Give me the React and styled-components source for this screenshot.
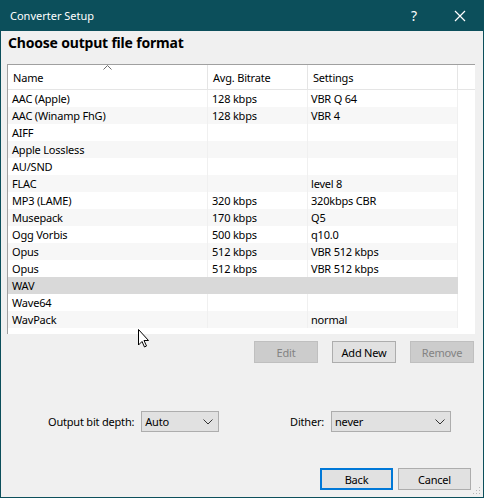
import React from "react";
import styled, { createGlobalStyle } from "styled-components";

const GlobalStyle = createGlobalStyle`
  html, body {
    margin: 0;
    padding: 0;
    background: #f0f0f0;
  }
  body {
    font-family: "Noto Sans", "Liberation Sans", sans-serif;
    font-size: 11px;
    letter-spacing: -0.2px;
    color: #000000;
  }
`;

const Window = styled.div`
  position: relative;
  width: 484px;
  height: 498px;
  box-sizing: border-box;
  border: 1px solid #0c4f5b;
  border-top: 0;
  background: #f0f0f0;
  display: flex;
  flex-direction: column;
  overflow: hidden;
`;

const TitleBar = styled.div`
  height: 31px;
  flex: none;
  background: #0c4f5b;
  color: #ffffff;
  display: flex;
  align-items: center;
  padding-left: 9px;
`;

const TitleText = styled.div`
  flex: 1;
  font-size: 11px;
  letter-spacing: 0;
`;

const TitleButton = styled.div`
  width: 46px;
  height: 31px;
  display: flex;
  align-items: center;
  justify-content: center;
  font-size: 14px;
`;

const Body = styled.div`
  flex: 1;
  display: flex;
  flex-direction: column;
  padding: 2px 8px 0 6px;
`;

const Heading = styled.h1`
  margin: 0 0 11px 1px;
  font-size: 14px;
  font-weight: 700;
  line-height: 20px;
`;

const List = styled.div`
  height: 269px;
  background: #ffffff;
  border-top: 1px solid #a0a0a0;
  border-left: 1px solid #a0a0a0;
  display: flex;
  flex-direction: column;
`;

const HeaderRow = styled.div`
  position: relative;
  display: flex;
  height: 24px;
  border-bottom: 1px solid #e5e5e5;
`;

const HeaderCell = styled.div`
  width: ${(p) => p.w}px;
  flex: ${(p) => (p.w ? "none" : "1")};
  box-sizing: border-box;
  border-right: ${(p) => (p.w ? "1px solid #e5e5e5" : "0")};
  padding-left: 5px;
  display: flex;
  align-items: center;
  position: relative;
`;

const SortArrow = styled.svg`
  position: absolute;
  top: 0;
  left: 95px;
`;

const Row = styled.div`
  display: flex;
  width: 450px;
  height: 17px;
  background: ${(p) => (p.selected ? "#d9d9d9" : p.odd ? "#f7f7f7" : "#ffffff")};
`;

const Cell = styled.div`
  width: ${(p) => p.w}px;
  flex: none;
  box-sizing: border-box;
  border-right: 1px solid ${(p) => (p.selected ? "#d9d9d9" : "#f0f0f0")};
  padding-left: ${(p) => p.pad}px;
  line-height: 17px;
  white-space: nowrap;
  overflow: hidden;
`;

const ButtonRow = styled.div`
  display: flex;
  justify-content: flex-end;
  gap: 14px;
  margin-top: 7px;
  padding-right: 1px;
`;

const Button = styled.div`
  width: ${(p) => p.w || 64}px;
  height: 22px;
  box-sizing: border-box;
  display: flex;
  align-items: center;
  justify-content: center;
  background: ${(p) => (p.disabled ? "#cccccc" : "#e1e1e1")};
  border: ${(p) =>
    p.primary ? "2px solid #0078d7" : p.disabled ? "1px solid #bfbfbf" : "1px solid #adadad"};
  color: ${(p) => (p.disabled ? "#838383" : "#000000")};
`;

const OptionsRow = styled.div`
  display: flex;
  justify-content: space-between;
  align-items: center;
  margin-top: 48px;
  padding: 0 24px 0 41px;
`;

const Field = styled.div`
  display: flex;
  align-items: center;
  gap: 7px;
`;

const Select = styled.div`
  width: ${(p) => p.w}px;
  height: 21px;
  box-sizing: border-box;
  background: #e1e1e1;
  border: 1px solid #adadad;
  display: flex;
  align-items: center;
  justify-content: space-between;
  padding: 0 5px 0 3px;
`;

const Footer = styled.div`
  display: flex;
  justify-content: flex-end;
  gap: 5px;
  margin-top: 36px;
  padding-right: 4px;
`;

const Grip = styled.svg`
  position: absolute;
  right: 2px;
  bottom: 2px;
`;

const Cursor = styled.svg`
  position: absolute;
  left: 137px;
  top: 329px;
`;

const formats = [
  ["AAC (Apple)", "128 kbps", "VBR Q 64"],
  ["AAC (Winamp FhG)", "128 kbps", "VBR 4"],
  ["AIFF", "", ""],
  ["Apple Lossless", "", ""],
  ["AU/SND", "", ""],
  ["FLAC", "", "level 8"],
  ["MP3 (LAME)", "320 kbps", "320kbps CBR"],
  ["Musepack", "170 kbps", "Q5"],
  ["Ogg Vorbis", "500 kbps", "q10.0"],
  ["Opus", "512 kbps", "VBR 512 kbps"],
  ["Opus", "512 kbps", "VBR 512 kbps"],
  ["WAV", "", ""],
  ["Wave64", "", ""],
  ["WavPack", "", "normal"],
];

const Chevron = () => (
  <svg width="10" height="6" viewBox="0 0 10 6">
    <polyline points="0.5,0.5 5,5 9.5,0.5" fill="none" stroke="#333" strokeWidth="1" />
  </svg>
);

export default function App() {
  return (
    <>
      <GlobalStyle />
      <Window>
        <TitleBar>
          <TitleText>Converter Setup</TitleText>
          <TitleButton>?</TitleButton>
          <TitleButton>
            <svg width="12" height="12" viewBox="0 0 12 12">
              <path d="M1 1 L11 11 M11 1 L1 11" stroke="#ffffff" strokeWidth="1.2" />
            </svg>
          </TitleButton>
        </TitleBar>
        <Body>
          <Heading>Choose output file format</Heading>
          <List>
            <HeaderRow>
              <HeaderCell w={200}>
                Name
                <SortArrow width="9" height="5" viewBox="0 0 9 5">
                  <polyline points="0.5,4.5 4.5,0.5 8.5,4.5" fill="none" stroke="#6d6d6d" strokeWidth="1" />
                </SortArrow>
              </HeaderCell>
              <HeaderCell w={100}>Avg. Bitrate</HeaderCell>
              <HeaderCell w={150}>Settings</HeaderCell>
              <HeaderCell />
            </HeaderRow>
            {formats.map(([name, rate, settings], i) => {
              const selected = name === "WAV";
              return (
                <Row key={i} odd={i % 2 === 1} selected={selected}>
                  <Cell w={200} pad={4} selected={selected}>{name}</Cell>
                  <Cell w={100} pad={4} selected={selected}>{rate}</Cell>
                  <Cell w={150} pad={3} selected={selected}>{settings}</Cell>
                </Row>
              );
            })}
          </List>
          <ButtonRow>
            <Button disabled>Edit</Button>
            <Button>Add New</Button>
            <Button disabled>Remove</Button>
          </ButtonRow>
          <OptionsRow>
            <Field>
              <span>Output bit depth:</span>
              <Select w={78}>
                <span>Auto</span>
                <Chevron />
              </Select>
            </Field>
            <Field>
              <span>Dither:</span>
              <Select w={120}>
                <span>never</span>
                <Chevron />
              </Select>
            </Field>
          </OptionsRow>
          <Footer>
            <Button primary w={73}>Back</Button>
            <Button w={73}>Cancel</Button>
          </Footer>
        </Body>
        <Grip width="8" height="8" viewBox="0 0 8 8">
          <rect x="6" y="0" width="1" height="1" fill="#b8b8b8" />
          <rect x="3" y="3" width="1" height="1" fill="#b8b8b8" />
          <rect x="6" y="3" width="1" height="1" fill="#b8b8b8" />
          <rect x="0" y="6" width="1" height="1" fill="#b8b8b8" />
          <rect x="3" y="6" width="1" height="1" fill="#b8b8b8" />
          <rect x="6" y="6" width="1" height="1" fill="#b8b8b8" />
        </Grip>
        <Cursor width="12" height="19" viewBox="0 0 12 19">
          <path
            d="M0.5 0.5 L0.5 16 L4 12.5 L6.5 18 L8.5 17 L6 11.5 L10.5 11.5 Z"
            fill="#ffffff"
            stroke="#000000"
            strokeWidth="1"
            strokeLinejoin="miter"
          />
        </Cursor>
      </Window>
    </>
  );
}
